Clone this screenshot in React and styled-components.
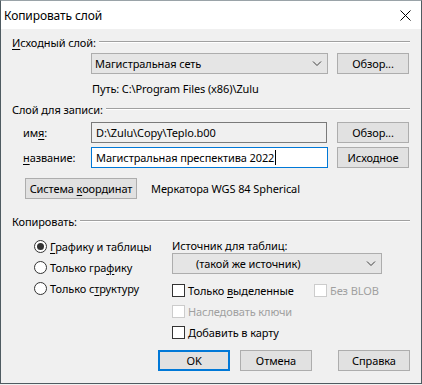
import React from "react";
import styled, { createGlobalStyle } from "styled-components";

const Global = createGlobalStyle`
  html, body { margin: 0; padding: 0; background: #f0f0f0; }
  body {
    font-family: "Noto Sans", "Liberation Sans", sans-serif;
    font-size: 11px;
    letter-spacing: -0.1px;
    color: #000;
    white-space: nowrap;
  }
`;

const Window = styled.div`
  width: 422px;
  height: 384px;
  box-sizing: border-box;
  border: 1px solid #4f5b61;
  border-top-color: #9aa3a8;
  background: #f0f0f0;
  display: flex;
  flex-direction: column;
  overflow: hidden;
`;

const TitleBar = styled.div`
  height: 28px;
  background: #fff;
  display: flex;
  align-items: center;
  justify-content: space-between;
  padding: 0 0 0 3px;
  font-size: 12px;
  flex-shrink: 0;
`;

const CloseBtn = styled.div`
  width: 32px;
  height: 28px;
  display: flex;
  align-items: center;
  justify-content: center;
`;

const Body = styled.div`
  padding: 6px 11px 0 11px;
  display: flex;
  flex-direction: column;
`;

const GroupHeader = styled.div`
  display: flex;
  align-items: center;
  height: 15px;
  margin-top: ${(p) => p.$mt || 0}px;
  span { margin-right: 3px; }
  &::after {
    content: "";
    flex: 1;
    border-top: 1px solid #a0a0a0;
    border-bottom: 1px solid #fff;
    margin-top: -1px;
  }
`;

const Row = styled.div`
  display: flex;
  align-items: center;
  height: ${(p) => p.$h || 21}px;
  margin-top: ${(p) => p.$mt || 0}px;
  padding-left: ${(p) => p.$pl || 0}px;
`;

const FieldLabel = styled.div`
  width: 79px;
  flex-shrink: 0;
  padding-left: 11px;
  box-sizing: border-box;
`;

const Combo = styled.div`
  width: ${(p) => p.$w}px;
  height: ${(p) => p.$hh || 21}px;
  flex-shrink: 0;
  box-sizing: border-box;
  border: 1px solid #adadad;
  background: #e5e5e5;
  display: flex;
  align-items: center;
  padding-left: ${(p) => p.$pad || 3}px;
  position: relative;
  svg { position: absolute; right: 5px; top: 50%; margin-top: -4px; }
`;

const Input = styled.div`
  width: ${(p) => p.$w}px;
  height: 21px;
  flex-shrink: 0;
  box-sizing: border-box;
  border: 1px solid ${(p) => (p.$focus ? "#0078d7" : "#7a7a7a")};
  background: ${(p) => (p.$readonly ? "#f0f0f0" : "#fff")};
  display: flex;
  align-items: center;
  padding-left: 4px;
`;

const Caret = styled.span`
  display: inline-block;
  width: 1px;
  height: 15px;
  background: #000;
  margin-left: 1px;
`;

const Button = styled.div`
  width: ${(p) => p.$w || 72}px;
  height: 21px;
  box-sizing: border-box;
  border: ${(p) => (p.$default ? "2px solid #0078d7" : "1px solid #adadad")};
  background: #e1e1e1;
  display: flex;
  align-items: center;
  justify-content: center;
  margin-left: ${(p) => p.$ml || 0}px;
  flex-shrink: 0;
`;

const Path = styled.div`
  padding-left: 80px;
  height: 15px;
  margin-top: 7px;
  line-height: 15px;
`;

const CopySection = styled.div`
  display: flex;
  margin-top: 9px;
`;

const RadioCol = styled.div`
  width: 160px;
  flex-shrink: 0;
  padding-left: 22px;
  box-sizing: border-box;
  display: flex;
  flex-direction: column;
  gap: 7px;
  padding-top: 1px;
`;

const RadioRow = styled.div`
  display: flex;
  align-items: center;
  height: 14px;
`;

const RadioDot = styled.span`
  width: 13px;
  height: 13px;
  flex-shrink: 0;
  box-sizing: border-box;
  border-radius: 50%;
  border: 1px solid #333;
  background: #fff;
  display: flex;
  align-items: center;
  justify-content: center;
  margin-right: 3px;
  &::after {
    content: "";
    display: ${(p) => (p.$on ? "block" : "none")};
    width: 7px;
    height: 7px;
    border-radius: 50%;
    background: #333;
  }
`;

const RightCol = styled.div`
  display: flex;
  flex-direction: column;
`;

const SourceLabel = styled.div`
  height: 15px;
  line-height: 15px;
`;

const CheckRow = styled.div`
  display: flex;
  align-items: center;
  height: 14px;
  margin-top: ${(p) => p.$mt || 0}px;
`;

const Check = styled.div`
  display: flex;
  align-items: center;
  color: ${(p) => (p.$disabled ? "#a0a0a0" : "#000")};
  width: ${(p) => (p.$w ? p.$w + "px" : "auto")};
  flex-shrink: 0;
`;

const Box = styled.span`
  width: 13px;
  height: 13px;
  flex-shrink: 0;
  box-sizing: border-box;
  border: 1px solid ${(p) => (p.$disabled ? "#cccccc" : "#333")};
  background: #fff;
  margin-right: 3px;
`;

const CoordName = styled.span`
  margin-left: 14px;
`;

const Footer = styled.div`
  display: flex;
  justify-content: flex-end;
  margin-top: 11px;
`;

const U = styled.u`
  text-underline-offset: 2px;
`;

const Chevron = () => (
  <svg width="10" height="7" viewBox="0 0 10 7">
    <path d="M1 1.5 L5 5.5 L9 1.5" fill="none" stroke="#404040" strokeWidth="1" />
  </svg>
);

export default function App() {
  return (
    <>
      <Global />
      <Window>
        <TitleBar>
          <span>Копировать слой</span>
          <CloseBtn>
            <svg width="11" height="11" viewBox="0 0 11 11">
              <path d="M0.5 0.5 L10.5 10.5 M10.5 0.5 L0.5 10.5" stroke="#000" strokeWidth="1" />
            </svg>
          </CloseBtn>
        </TitleBar>
        <Body>
          <GroupHeader>
            <span><U>И</U>сходный слой:</span>
          </GroupHeader>
          <Row $mt={3} $pl={79}>
            <Combo $w={237}>
              <span>Магистральная сеть</span>
              <Chevron />
            </Combo>
            <Button $ml={9}>Обзор...</Button>
          </Row>
          <Path>Путь: C:\Program Files (x86)\Zulu</Path>

          <GroupHeader $mt={6}>
            <span>Слой для записи:</span>
          </GroupHeader>
          <Row $mt={5}>
            <FieldLabel>им<U>я</U>:</FieldLabel>
            <Input $w={236} $readonly>D:\Zulu\Copy\Teplo.b00</Input>
            <Button $ml={10}>Обзор...</Button>
          </Row>
          <Row $mt={4}>
            <FieldLabel><U>н</U>азвание:</FieldLabel>
            <Input $w={237} $focus>
              <span>Магистральная преспектива 2022</span><Caret />
            </Input>
            <Button $ml={9}>Исходное</Button>
          </Row>
          <Row $mt={10} $pl={13}>
            <Button $w={112}><span>Система <U>к</U>оординат</span></Button>
            <CoordName>Меркатора WGS 84 Spherical</CoordName>
          </Row>

          <GroupHeader $mt={15}>
            <span>Копировать:</span>
          </GroupHeader>
          <CopySection>
            <RadioCol>
              <RadioRow><RadioDot $on /><span><U>Г</U>рафику и таблицы</span></RadioRow>
              <RadioRow><RadioDot /><span>Только гра<U>ф</U>ику</span></RadioRow>
              <RadioRow><RadioDot /><span>Только с<U>т</U>руктуру</span></RadioRow>
            </RadioCol>
            <RightCol>
              <SourceLabel>Источник для таблиц:</SourceLabel>
              <Combo $w={210} $hh={21} $pad={23}>
                <span>(такой же источник)</span>
                <Chevron />
              </Combo>
              <CheckRow $mt={9}>
                <Check $w={142}><Box /><span>Только <U>в</U>ыделенные</span></Check>
                <Check $disabled><Box $disabled /><span>Без BLOB</span></Check>
              </CheckRow>
              <CheckRow $mt={7}>
                <Check $disabled><Box $disabled /><span>Наследовать ключи</span></Check>
              </CheckRow>
              <CheckRow $mt={7}>
                <Check><Box /><span>Добавить в карту</span></Check>
              </CheckRow>
            </RightCol>
          </CopySection>
          <Footer>
            <Button $default>OK</Button>
            <Button $ml={10}>Отмена</Button>
            <Button $ml={26}>Справка</Button>
          </Footer>
        </Body>
      </Window>
    </>
  );
}
